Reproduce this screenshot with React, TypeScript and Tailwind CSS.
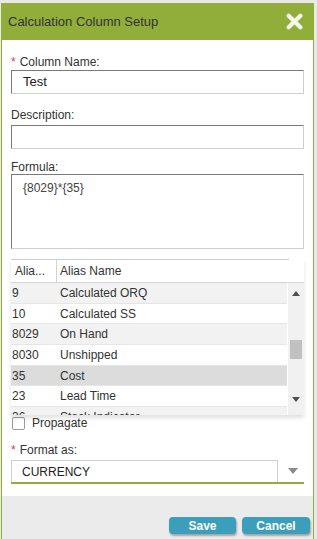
import { Fragment } from "react";

const rows = [
    { id: "9", name: "Calculated ORQ" },
    { id: "10", name: "Calculated SS" },
    { id: "8029", name: "On Hand" },
    { id: "8030", name: "Unshipped" },
    { id: "35", name: "Cost", selected: true },
    { id: "23", name: "Lead Time" },
    { id: "36", name: "Stock Indicator" },
];

const inputBorder =
    "border border-t-[#7a7a7a] border-l-[#7a7a7a] border-r-[#cfcfcf] border-b-[#cfcfcf]";

const Label = ({ text, required }: { text: string; required?: boolean }) => (
    <div className="h-[14px] text-[12px] leading-[14px] text-[#333]">
        {required && <span className="text-[#e53935] mr-[4px]">*</span>}
        {text}
    </div>
);

const App = () => {
    return (
        <div
            className="w-[317px] h-[539px] bg-[#e9e9e9] pt-[3px] overflow-hidden"
            style={{ fontFamily: '"Liberation Sans", Arial, sans-serif' }}
        >
            <div className="ml-[1px] w-[313px] h-[536px] border-x border-[#91ad3a] bg-white flex flex-col">
                <div className="h-[37px] shrink-0 bg-[#91ad3a] flex items-center justify-between pl-[6px] pr-[10px]">
                    <span className="text-[13px] text-[#333]">
                        Calculation Column Setup
                    </span>
                    <svg width="17" height="17" viewBox="0 0 16 16">
                        <path
                            d="M2.5 2.5 L13.5 13.5 M13.5 2.5 L2.5 13.5"
                            stroke="#f4f8ea"
                            strokeWidth="4"
                            strokeLinecap="round"
                        />
                    </svg>
                </div>
                <div className="flex-1 px-[9px] pt-[15px] flex flex-col">
                    <Label text="Column Name:" required />
                    <div
                        className={`mt-[1px] h-[24px] shrink-0 ${inputBorder} px-[11px] flex items-center text-[13px] text-[#222]`}
                    >
                        Test
                    </div>
                    <div className="mt-[14px]">
                        <Label text="Description:" />
                    </div>
                    <div className={`mt-[3px] h-[24px] shrink-0 ${inputBorder}`} />
                    <div className="mt-[11px]">
                        <Label text="Formula:" />
                    </div>
                    <div
                        className={`h-[75px] shrink-0 ${inputBorder} px-[11px] pt-[4px] text-[12px] text-[#444]`}
                    >
                        {"{8029}*{35}"}
                    </div>
                    <div className="mt-[10px] h-[156px] shrink-0 relative shadow-[0_3px_4px_rgba(0,0,0,0.12)]">
                        <div className="flex h-[24px] border-b border-[#d4d4d4]">
                            <div className="w-[278px] flex border-t border-[#d0d0d0] text-[12px] text-[#333]">
                                <div className="w-[46px] border-r border-[#d4d4d4] pl-[4px] flex items-center">
                                    Alia...
                                </div>
                                <div className="pl-[3px] flex items-center">
                                    Alias Name
                                </div>
                            </div>
                        </div>
                        <div className="flex h-[132px] overflow-hidden">
                            <div className="w-[278px]">
                                {rows.map((r, idx) => (
                                    <Fragment key={idx}>
                                        <div
                                            className={`h-[20.7px] flex items-center text-[12px] text-[#333] border-b border-[#e6e6e6] ${
                                                r.selected
                                                    ? "bg-[#dcdcdc]"
                                                    : idx % 2 === 0
                                                      ? "bg-[#f2f2f2]"
                                                      : "bg-white"
                                            }`}
                                        >
                                            <div className="w-[46px] pl-[1px]">
                                                {r.id}
                                            </div>
                                            <div className="pl-[3px]">
                                                {r.name}
                                            </div>
                                        </div>
                                    </Fragment>
                                ))}
                            </div>
                            <div className="w-[16px] ml-[1px] bg-[#f1f1f1] flex flex-col items-center pt-[8px]">
                                <svg width="8" height="5" viewBox="0 0 8 5">
                                    <path d="M0 5 L4 0 L8 5 Z" fill="#505050" />
                                </svg>
                                <div className="mt-[44px] w-[12px] h-[19px] bg-[#c1c1c1]" />
                                <div className="mt-[38px]">
                                    <svg width="8" height="5" viewBox="0 0 8 5">
                                        <path d="M0 0 L8 0 L4 5 Z" fill="#505050" />
                                    </svg>
                                </div>
                            </div>
                        </div>
                    </div>
                    <label className="h-[16px] shrink-0 flex items-center gap-[7px] text-[12px] leading-[14px] text-[#333]">
                        <span className="ml-[1px] w-[13px] h-[13px] border border-[#9a9a9a] rounded-[2px] bg-white" />
                        Propagate
                    </label>
                    <div className="mt-[12px]">
                        <Label text="Format as:" required />
                    </div>
                    <div className="mt-[3px] flex h-[24px] shrink-0 border-b-2 border-[#91ad3a]">
                        <div className="w-[267px] border border-[#cfcfcf] border-b-0 px-[10px] flex items-center text-[12px] text-[#222]">
                            CURRENCY
                        </div>
                        <div className="flex-1 flex items-center justify-center pl-[3px]">
                            <svg width="10" height="6" viewBox="0 0 10 6">
                                <path d="M0 0 L10 0 L5 6 Z" fill="#8a8a8a" />
                            </svg>
                        </div>
                    </div>
                </div>
                <div className="h-[43px] shrink-0 bg-[#ebebeb] flex items-start justify-end gap-[6px] pr-[3px] pt-[21px]">
                    <button className="w-[67px] h-[17px] rounded-[4px] bg-[#3b9fbb] text-white text-[12px] font-bold shadow-[1px_2px_2px_rgba(0,0,0,0.3)]">
                        Save
                    </button>
                    <button className="w-[68px] h-[17px] rounded-[4px] bg-[#3b9fbb] text-white text-[12px] font-bold shadow-[1px_2px_2px_rgba(0,0,0,0.3)]">
                        Cancel
                    </button>
                </div>
            </div>
        </div>
    );
};

export default App;
